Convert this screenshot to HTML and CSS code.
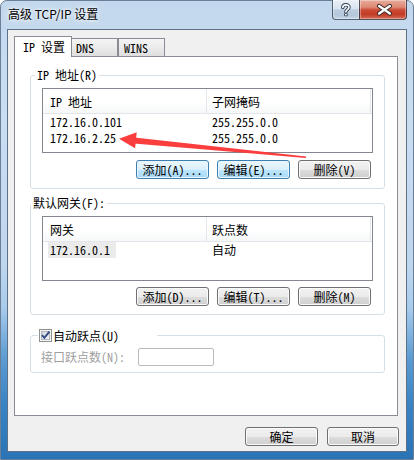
FILE: index.html
```html
<!DOCTYPE html>
<html lang="zh-CN">
<head>
<meta charset="utf-8">
<title>高级 TCP/IP 设置</title>
<link rel="stylesheet" href="styles.css">
</head>
<body>
<div class="window">
  <div class="titlebar">
    <span class="title">高级 TCP/IP 设置</span>
    <div class="caption-btns">
      <div class="cbtn help">
        <svg width="27" height="19" viewBox="0 0 27 19">
          <path d="M10.2 7.4 C10.2 3.8 16.6 3.8 16.6 7.2 C16.6 9.6 13.4 9.6 13.4 12" fill="none" stroke="#2e3f55" stroke-width="3.6" stroke-linecap="round"/>
          <rect x="11.6" y="13.3" width="3.6" height="3.2" rx="1" fill="#2e3f55"/>
          <path d="M10.2 7.4 C10.2 3.8 16.6 3.8 16.6 7.2 C16.6 9.6 13.4 9.6 13.4 12" fill="none" stroke="#fff" stroke-width="1.7" stroke-linecap="round"/>
          <rect x="12.5" y="14.1" width="1.8" height="1.6" fill="#fff"/>
        </svg>
      </div>
      <div class="cbtn close">
        <svg width="47" height="19" viewBox="0 0 47 19">
          <path d="M19.5 6 L30.5 13.6 M30.5 6 L19.5 13.6" stroke="#3a2a2a" stroke-width="4.4" stroke-linecap="round"/>
          <path d="M19.5 6 L30.5 13.6 M30.5 6 L19.5 13.6" stroke="#fff" stroke-width="2.4" stroke-linecap="round"/>
        </svg>
      </div>
    </div>
  </div>

  <div class="client">
    <div class="tabs">
      <div class="tab active">IP 设置</div>
      <div class="tab dns">DNS</div>
      <div class="tab wins">WINS</div>
    </div>

    <div class="panel">
      <fieldset class="group g1">
        <legend>IP 地址(R)</legend>
        <div class="gbody">
          <div class="list">
            <div class="lhead"><div class="c1">IP 地址</div><div class="c2">子网掩码</div></div>
            <div class="lrow"><div class="c1">172.16.0.101</div><div class="c2">255.255.0.0</div></div>
            <div class="lrow"><div class="c1">172.16.2.25</div><div class="c2">255.255.0.0</div></div>
          </div>
          <div class="btnrow">
            <button class="btn blue">添加(A)...</button>
            <button class="btn blue">编辑(E)...</button>
            <button class="btn">删除(V)</button>
          </div>
        </div>
      </fieldset>

      <fieldset class="group g2">
        <legend>默认网关(F):</legend>
        <div class="gbody">
          <div class="list">
            <div class="lhead"><div class="c1">网关</div><div class="c2">跃点数</div></div>
            <div class="lrow"><div class="c1"><span class="sel">172.16.0.1</span></div><div class="c2">自动</div></div>
          </div>
          <div class="btnrow">
            <button class="btn">添加(D)...</button>
            <button class="btn">编辑(T)...</button>
            <button class="btn">删除(M)</button>
          </div>
        </div>
      </fieldset>

      <fieldset class="group g3">
        <legend>
          <svg class="check" width="13" height="13" viewBox="0 0 13 13">
            <defs>
              <linearGradient id="cb" x1="0" y1="0" x2="1" y2="1">
                <stop offset="0" stop-color="#cfd3d9"/>
                <stop offset="1" stop-color="#f7f7f7"/>
              </linearGradient>
            </defs>
            <rect x="0.5" y="0.5" width="12" height="12" fill="#f5f5f5" stroke="#8e8f8f"/>
            <rect x="2.5" y="2.5" width="8" height="8" fill="url(#cb)" stroke="#b3b7bd"/>
            <path d="M3 6.2 L5.4 8.8 L10.4 2.6" fill="none" stroke="#324a86" stroke-width="1.9"/>
          </svg>
          <span>自动跃点(U)</span>
        </legend>
        <div class="gbody">
          <div class="metric">
            <span class="mlabel">接口跃点数(N):</span>
            <div class="input"></div>
          </div>
        </div>
      </fieldset>
    </div>

    <div class="footer">
      <button class="btn ok">确定</button>
      <button class="btn">取消</button>
    </div>
  </div>
</div>

<svg class="arrow" width="414" height="460" viewBox="0 0 414 460">
  <polygon points="134.3,137.4 306.1,156.4 305.9,158.0 133.7,143.6" fill="#fa3d3d"/>
  <polygon points="119,138.7 136.7,132.3 135.1,148.3" fill="#fa3d3d"/>
</svg>
</body>
</html>
```

FILE: styles.css
```css
* { box-sizing: border-box; }

html, body {
  margin: 0;
  padding: 0;
}

body {
  width: 414px;
  height: 460px;
  overflow: hidden;
  background: #ffffff;
  font-family: "Noto Sans CJK SC", "Noto Sans", sans-serif;
  font-size: 12px;
  color: #000;
}

.window {
  width: 414px;
  height: 460px;
  padding: 0 6px 7px 6px;
  display: flex;
  flex-direction: column;
  border: 1px solid #6b7f96;
  border-radius: 7px 7px 0 0;
  background: linear-gradient(180deg, #c3d8ed 0%, #cadef1 25%, #bed6ee 58%, #a8cbec 67%, #5c9bd2 78%, #3a84c4 88%, #2a74b6 100%);
}

/* title bar */
.titlebar {
  height: 28px;
  display: flex;
  align-items: flex-start;
}

.title {
  margin: 5px 0 0 1px;
  line-height: 16px;
  font-size: 12px;
  color: #000;
  text-shadow: 0 0 6px #ffffff, 0 0 3px #ffffff;
}

.caption-btns {
  margin-left: auto;
  margin-top: -1px;
  display: flex;
}

.cbtn {
  height: 20px;
  border: 1px solid rgba(38, 52, 72, 0.75);
  border-top: none;
  display: flex;
  box-shadow: inset 0 0 0 1px rgba(255, 255, 255, 0.35);
}

.cbtn svg { display: block; }

.help {
  width: 27px;
  border-right: none;
  border-radius: 0 0 0 4px;
  background: linear-gradient(180deg, #e9eff6 0%, #d8e3ef 45%, #bccddf 52%, #b5c8db 80%, #c6d6e6 100%);
}

.close {
  width: 48px;
  border-radius: 0 0 4px 0;
  background: linear-gradient(180deg, #e8ab9b 0%, #dd8873 38%, #cb4b35 52%, #c23c27 75%, #d46a52 100%);
}

/* client area */
.client {
  height: 423px;
  background: #f0f0f0;
  border: 1px solid #5f7186;
  display: flex;
  flex-direction: column;
}

.tabs {
  height: 26px;
  margin-left: 6px;
  display: flex;
  align-items: flex-end;
}

.tab {
  height: 18px;
  border: 1px solid #898c95;
  border-bottom: none;
  padding: 2px 0 0 5px;
  line-height: 14px;
  font-feature-settings: "hwid";
  background: linear-gradient(180deg, #f4f4f4 0%, #ebebeb 50%, #dedede 100%);
}

.tab.active {
  width: 58px;
  height: 21px;
  margin-bottom: -1px;
  padding: 3px 0 0 8px;
  background: #ffffff;
  position: relative;
  z-index: 1;
}

.tab.dns {
  width: 46px;
  padding-left: 4px;
  border-left: none;
}

.tab.wins {
  width: 47px;
  padding-left: 5px;
}

.panel {
  width: 384px;
  height: 360px;
  margin-left: 6px;
  border: 1px solid #898c95;
  background: #ffffff;
  display: flex;
  flex-direction: column;
}

/* group boxes */
.group {
  width: 355px;
  margin: 0 0 0 15px;
  padding: 0;
  min-width: 0;
  border: 1px solid #d5dfe5;
  border-radius: 3px;
  font-feature-settings: "hwid";
}

.group legend {
  padding: 0 2px;
  line-height: 12px;
  height: 12px;
  font-size: 12px;
}

.g1 { margin-top: 12px; }
.g1 legend { margin-left: 4px; }

.g2 { margin-top: 8px; }
.g2 legend { margin-left: 0; }

.g3 { margin-top: 14px; }
.g3 legend {
  margin-left: 7px;
  height: 13px;
  width: 119px;
  padding: 0 0 0 1px;
  display: flex;
  align-items: center;
}

.check {
  display: block;
  flex: none;
}

.g3 legend span {
  margin-left: 1px;
  line-height: 13px;
}

.gbody {
  padding: 7px 11px 9px 11px;
}

.g2 .gbody { padding-bottom: 8px; }
.g2 .btnrow { margin-top: 6px; }

.g3 .gbody { padding: 6px 11px 6px 10px; }

/* list view */
.list {
  height: 65px;
  border: 1px solid #828790;
  background: #ffffff;
}

.lhead {
  display: flex;
  height: 25px;
  border-bottom: 1px solid #e2e6eb;
  background: linear-gradient(180deg, #ffffff 0%, #ffffff 55%, #f6f7f9 100%);
}

.lhead .c1,
.lhead .c2 {
  width: 164px;
  padding-top: 2px;
  line-height: 22px;
  border-right: 1px solid #e3e8ee;
}

.c1 { width: 164px; padding-left: 7px; }
.c2 { width: 164px; padding-left: 5px; }

.lrow {
  display: flex;
  height: 16px;
  line-height: 16px;
}

.sel {
  display: inline-block;
  margin-left: -2px;
  padding: 0 6px 0 2px;
  background: #ebebeb;
}

/* buttons */
.btnrow {
  margin-top: 7px;
  padding-right: 2px;
  display: flex;
  justify-content: flex-end;
  gap: 8px;
}

.btn {
  width: 73px;
  height: 19px;
  padding: 0;
  margin: 0;
  font-family: "Noto Sans CJK SC", "Noto Sans", sans-serif;
  font-size: 12px;
  line-height: 15px;
  font-feature-settings: "hwid";
  color: #000;
  border: 1px solid #707070;
  border-radius: 3px;
  background: linear-gradient(180deg, #f2f2f2 0%, #ebebeb 50%, #dddddd 51%, #cfcfcf 100%);
  box-shadow: inset 0 0 0 1px #fbfbfb;
}

.btn.blue {
  border-color: #3c7fb1;
  background: linear-gradient(180deg, #eaf6fd 0%, #d9f0fc 50%, #bee6fd 51%, #a7d9f5 100%);
  box-shadow: inset 0 0 0 1px #e9f6fd;
}

/* metric row */
.metric {
  display: flex;
  align-items: center;
}

.mlabel {
  width: 97px;
  line-height: 18px;
  color: #a0a0a0;
}

.input {
  width: 76px;
  height: 18px;
  border: 1px solid #b8bcc1;
  border-radius: 2px;
  background: #ffffff;
}

/* footer */
.footer {
  margin-top: 11px;
  padding-right: 7px;
  display: flex;
  justify-content: flex-end;
  gap: 9px;
}

.footer .btn { width: 72px; }
.footer .btn.ok { width: 73px; }

/* red annotation arrow */
.arrow {
  position: absolute;
  left: 0;
  top: 0;
  pointer-events: none;
}
```
